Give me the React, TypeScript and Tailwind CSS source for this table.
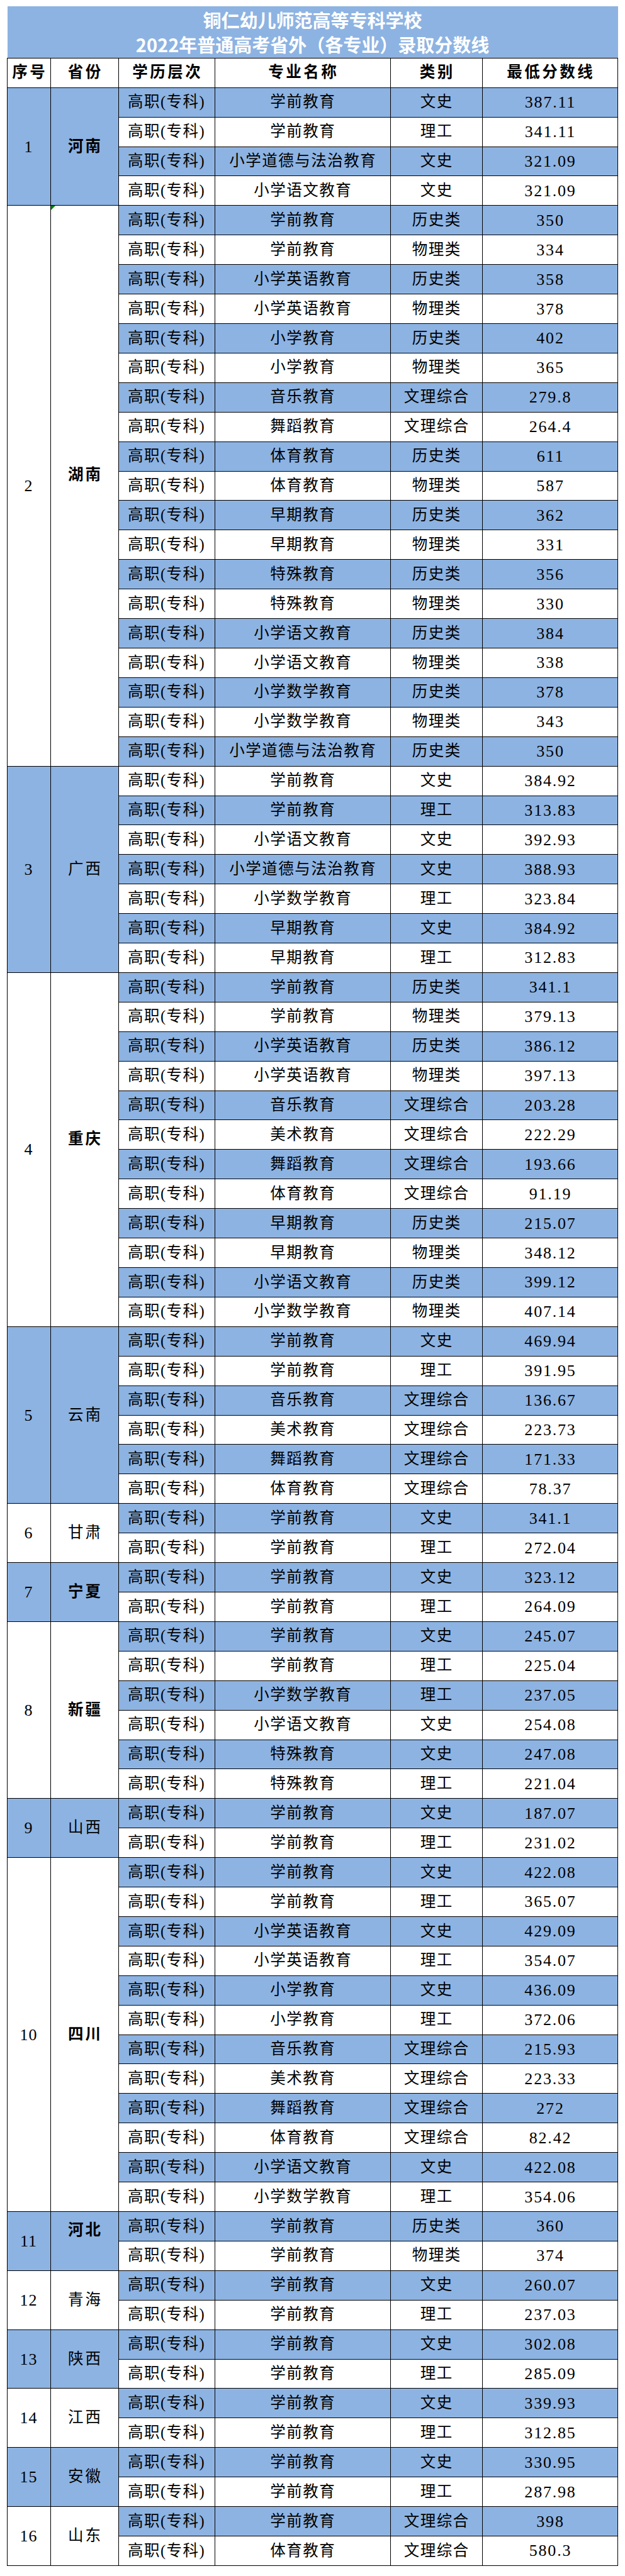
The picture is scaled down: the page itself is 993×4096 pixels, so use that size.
const level = "高职(专科)";

type Group = {
  no: number;
  name: string;
  bold?: boolean;
  raised?: boolean;
  rows: [string, string, string][];
};

const groups: Group[] = [
  {
    no: 1,
    name: "河南",
    bold: true,
    rows: [
      ["学前教育", "文史", "387.11"],
      ["学前教育", "理工", "341.11"],
      ["小学道德与法治教育", "文史", "321.09"],
      ["小学语文教育", "文史", "321.09"],
    ],
  },
  {
    no: 2,
    name: "湖南",
    bold: true,
    raised: true,
    rows: [
      ["学前教育", "历史类", "350"],
      ["学前教育", "物理类", "334"],
      ["小学英语教育", "历史类", "358"],
      ["小学英语教育", "物理类", "378"],
      ["小学教育", "历史类", "402"],
      ["小学教育", "物理类", "365"],
      ["音乐教育", "文理综合", "279.8"],
      ["舞蹈教育", "文理综合", "264.4"],
      ["体育教育", "历史类", "611"],
      ["体育教育", "物理类", "587"],
      ["早期教育", "历史类", "362"],
      ["早期教育", "物理类", "331"],
      ["特殊教育", "历史类", "356"],
      ["特殊教育", "物理类", "330"],
      ["小学语文教育", "历史类", "384"],
      ["小学语文教育", "物理类", "338"],
      ["小学数学教育", "历史类", "378"],
      ["小学数学教育", "物理类", "343"],
      ["小学道德与法治教育", "历史类", "350"],
    ],
  },
  {
    no: 3,
    name: "广西",
    rows: [
      ["学前教育", "文史", "384.92"],
      ["学前教育", "理工", "313.83"],
      ["小学语文教育", "文史", "392.93"],
      ["小学道德与法治教育", "文史", "388.93"],
      ["小学数学教育", "理工", "323.84"],
      ["早期教育", "文史", "384.92"],
      ["早期教育", "理工", "312.83"],
    ],
  },
  {
    no: 4,
    name: "重庆",
    bold: true,
    raised: true,
    rows: [
      ["学前教育", "历史类", "341.1"],
      ["学前教育", "物理类", "379.13"],
      ["小学英语教育", "历史类", "386.12"],
      ["小学英语教育", "物理类", "397.13"],
      ["音乐教育", "文理综合", "203.28"],
      ["美术教育", "文理综合", "222.29"],
      ["舞蹈教育", "文理综合", "193.66"],
      ["体育教育", "文理综合", "91.19"],
      ["早期教育", "历史类", "215.07"],
      ["早期教育", "物理类", "348.12"],
      ["小学语文教育", "历史类", "399.12"],
      ["小学数学教育", "物理类", "407.14"],
    ],
  },
  {
    no: 5,
    name: "云南",
    rows: [
      ["学前教育", "文史", "469.94"],
      ["学前教育", "理工", "391.95"],
      ["音乐教育", "文理综合", "136.67"],
      ["美术教育", "文理综合", "223.73"],
      ["舞蹈教育", "文理综合", "171.33"],
      ["体育教育", "文理综合", "78.37"],
    ],
  },
  {
    no: 6,
    name: "甘肃",
    rows: [
      ["学前教育", "文史", "341.1"],
      ["学前教育", "理工", "272.04"],
    ],
  },
  {
    no: 7,
    name: "宁夏",
    bold: true,
    rows: [
      ["学前教育", "文史", "323.12"],
      ["学前教育", "理工", "264.09"],
    ],
  },
  {
    no: 8,
    name: "新疆",
    bold: true,
    rows: [
      ["学前教育", "文史", "245.07"],
      ["学前教育", "理工", "225.04"],
      ["小学数学教育", "理工", "237.05"],
      ["小学语文教育", "文史", "254.08"],
      ["特殊教育", "文史", "247.08"],
      ["特殊教育", "理工", "221.04"],
    ],
  },
  {
    no: 9,
    name: "山西",
    rows: [
      ["学前教育", "文史", "187.07"],
      ["学前教育", "理工", "231.02"],
    ],
  },
  {
    no: 10,
    name: "四川",
    bold: true,
    rows: [
      ["学前教育", "文史", "422.08"],
      ["学前教育", "理工", "365.07"],
      ["小学英语教育", "文史", "429.09"],
      ["小学英语教育", "理工", "354.07"],
      ["小学教育", "文史", "436.09"],
      ["小学教育", "理工", "372.06"],
      ["音乐教育", "文理综合", "215.93"],
      ["美术教育", "文理综合", "223.33"],
      ["舞蹈教育", "文理综合", "272"],
      ["体育教育", "文理综合", "82.42"],
      ["小学语文教育", "文史", "422.08"],
      ["小学数学教育", "理工", "354.06"],
    ],
  },
  {
    no: 11,
    name: "河北",
    bold: true,
    raised: true,
    rows: [
      ["学前教育", "历史类", "360"],
      ["学前教育", "物理类", "374"],
    ],
  },
  {
    no: 12,
    name: "青海",
    rows: [
      ["学前教育", "文史", "260.07"],
      ["学前教育", "理工", "237.03"],
    ],
  },
  {
    no: 13,
    name: "陕西",
    rows: [
      ["学前教育", "文史", "302.08"],
      ["学前教育", "理工", "285.09"],
    ],
  },
  {
    no: 14,
    name: "江西",
    rows: [
      ["学前教育", "文史", "339.93"],
      ["学前教育", "理工", "312.85"],
    ],
  },
  {
    no: 15,
    name: "安徽",
    rows: [
      ["学前教育", "文史", "330.95"],
      ["学前教育", "理工", "287.98"],
    ],
  },
  {
    no: 16,
    name: "山东",
    rows: [
      ["学前教育", "文理综合", "398"],
      ["体育教育", "文理综合", "580.3"],
    ],
  },
];

const spans: Record<number, string> = {
  2: "row-span-2",
  4: "row-span-4",
  6: "row-span-6",
  7: "row-span-7",
  12: "row-span-12",
  19: "row-span-19",
};

const headers = ["序号", "省份", "学历层次", "专业名称", "类别", "最低分数线"];

function Cell({ blue, className, children }: { blue: boolean; className?: string; children: React.ReactNode }) {
  return (
    <div
      className={`flex items-center justify-center whitespace-nowrap ${blue ? "bg-[#8db3e2]" : "bg-white"} ${className ?? ""}`}
    >
      {children}
    </div>
  );
}

export default function App() {
  let rowIndex = 0;

  return (
    <div className="min-h-[4096px] w-[993px] bg-white pt-[10.35px] pl-[10.6px] font-['Liberation_Serif','Noto_Sans_CJK_SC',serif] text-black">
      <div className="ml-px flex h-[81.5px] w-[970px] flex-col items-center justify-center bg-[#8db3e2] font-['Noto_Sans_CJK_SC',sans-serif] text-[29px] leading-[38.7px] font-bold text-white">
        <div>铜仁幼儿师范高等专科学校</div>
        <div>2022年普通高考省外（各专业）录取分数线</div>
      </div>

      <div className="grid w-[971px] auto-rows-[45.92px] grid-cols-[68px_107px_152px_278px_145px_214px] gap-px bg-black p-px">
        {headers.map((h) => (
          <Cell key={h} blue={false} className="pl-[3.5px] text-[24.5px] font-bold tracking-[3.5px]">
            {h}
          </Cell>
        ))}

        {groups.map((g, gi) => {
          const groupBlue = gi % 2 === 0;
          return [
            <Cell key={`no-${g.no}`} blue={groupBlue} className={`${spans[g.rows.length]} text-[26px] tracking-[1px]`}>
              {g.no}
            </Cell>,
            <Cell
              key={`name-${g.no}`}
              blue={groupBlue}
              className={`relative ${spans[g.rows.length]} pl-[3px] text-[24.5px] tracking-[3px] ${g.bold ? "font-bold" : ""}`}
            >
              {g.no === 2 && (
                <svg className="absolute top-0 left-0" width="7" height="7" viewBox="0 0 7 7">
                  <polygon points="0,0 7,0 0,7" fill="#008000" />
                </svg>
              )}
              <span className={g.raised ? "-translate-y-[17px]" : ""}>{g.name}</span>
            </Cell>,
            ...g.rows.map(([major, kind, score]) => {
              const blue = rowIndex % 2 === 0;
              rowIndex += 1;
              return [
                <Cell key={`l-${rowIndex}`} blue={blue} className="text-[24.5px] tracking-[1.5px]">
                  {level}
                </Cell>,
                <Cell key={`m-${rowIndex}`} blue={blue} className="pl-[1.5px] text-[24.5px] tracking-[1.5px]">
                  {major}
                </Cell>,
                <Cell key={`k-${rowIndex}`} blue={blue} className="pl-[1.5px] text-[24.5px] tracking-[1.5px]">
                  {kind}
                </Cell>,
                <Cell key={`s-${rowIndex}`} blue={blue} className="pl-[1.8px] text-[26px] tracking-[1.8px]">
                  {score}
                </Cell>,
              ];
            }),
          ];
        })}
      </div>
    </div>
  );
}
